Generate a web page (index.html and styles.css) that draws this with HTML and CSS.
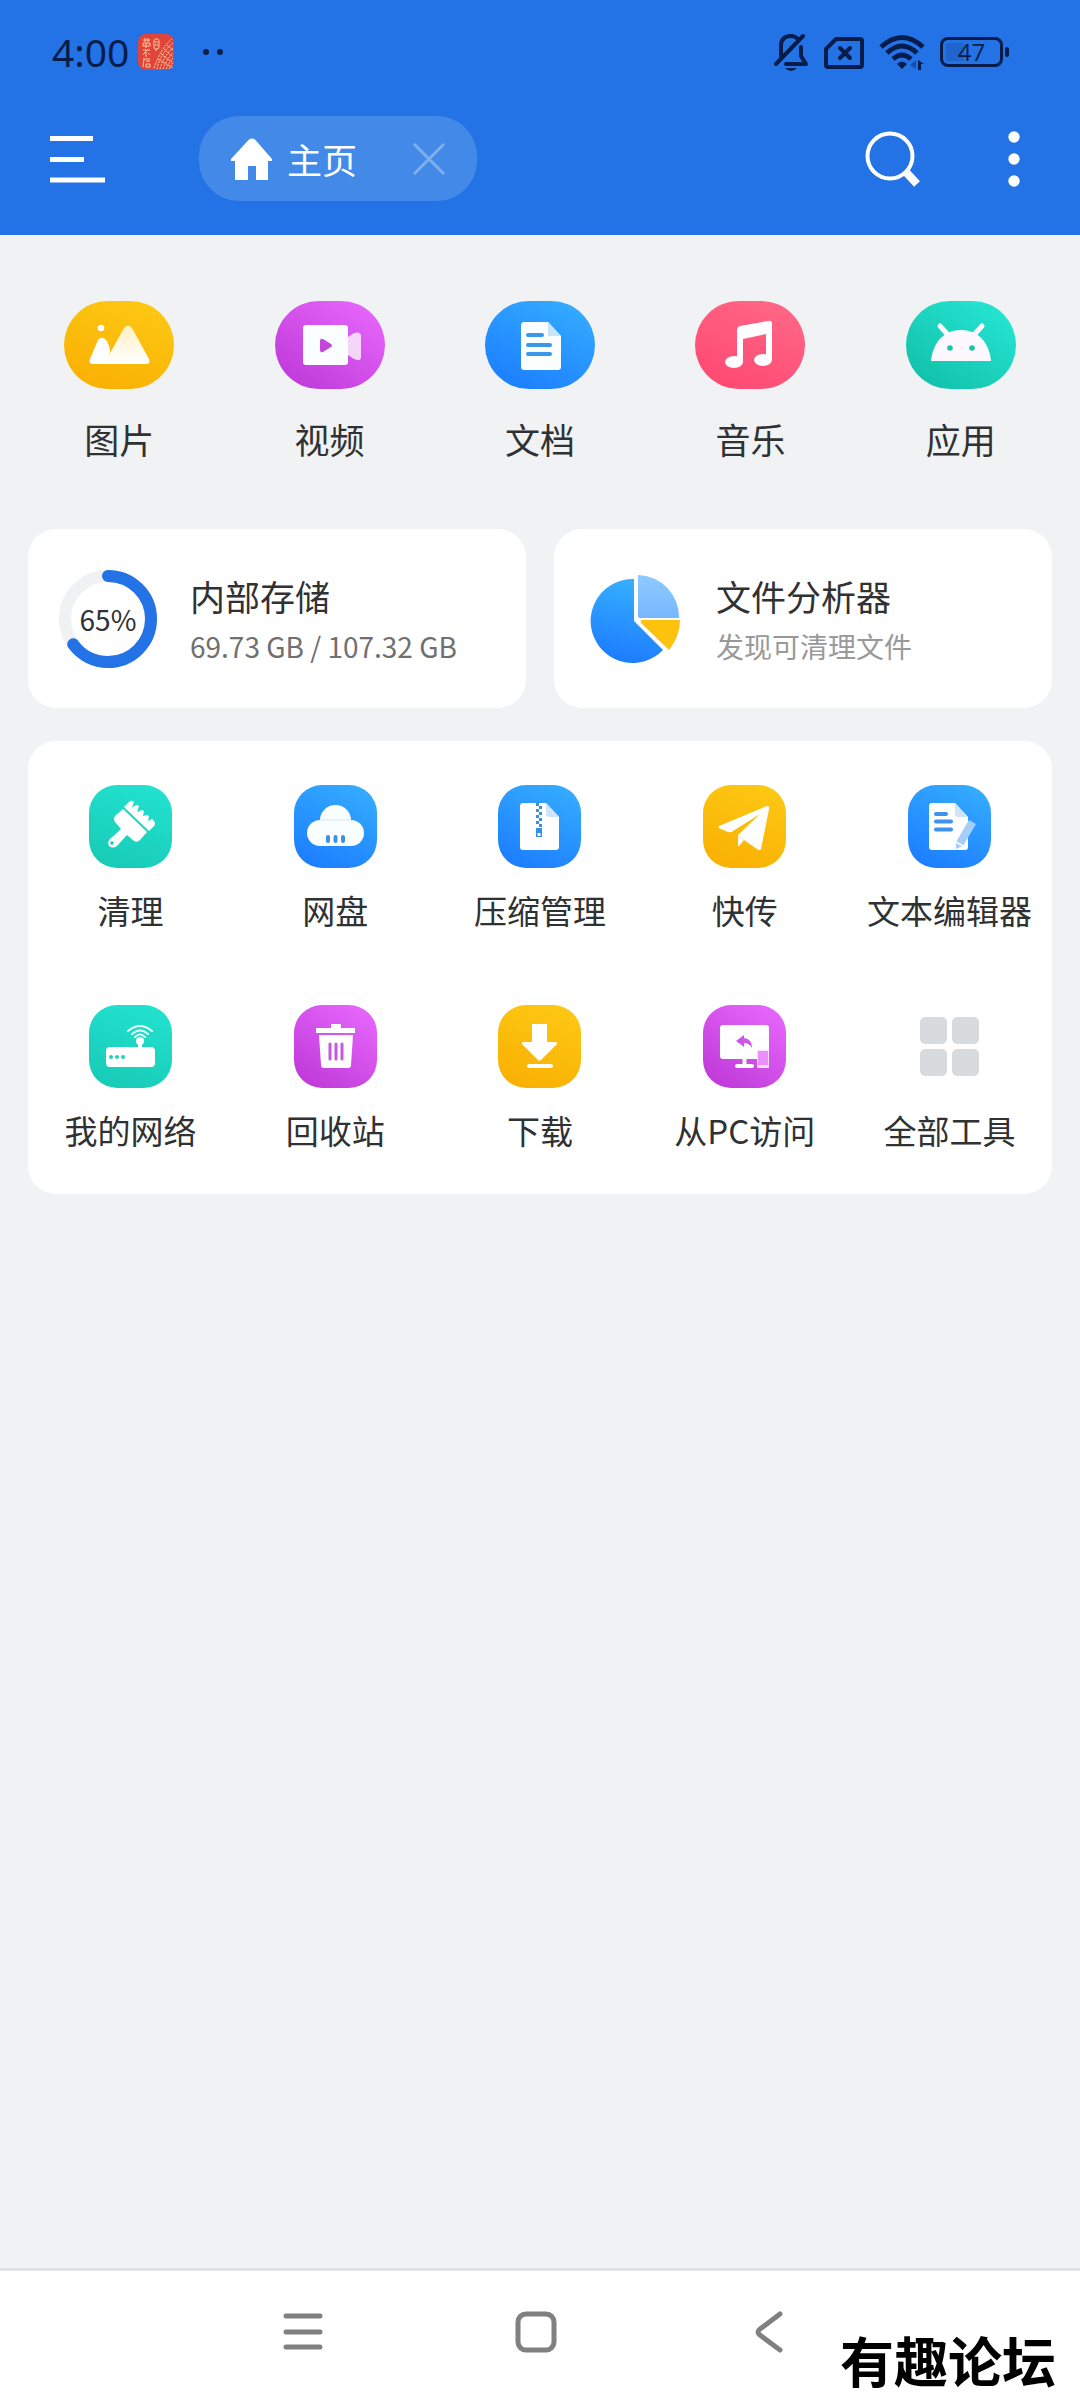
FILE: index.html
```html
<!DOCTYPE html>
<html lang="zh-CN">
<head>
<meta charset="utf-8">
<meta name="viewport" content="width=device-width, initial-scale=1">
<title>主页</title>
<link rel="stylesheet" href="styles.css">
</head>
<body>
<header class="header">
  <div class="status">
    <div class="status-group status-left">
      <span class="clock">4:00</span>
      <svg class="app-badge" width="36" height="36" viewBox="0 0 36 36" aria-hidden="true">
        <rect width="36" height="36" rx="8" fill="#e0443b"/>
        <g fill="none" stroke="#f6cf9f" stroke-width="1">
          <path d="M5 6h7M7 4v4M10 4v4M5 9h7v3H5zM8 9v5M5 16h7M9 16l-4 5M8 18v5M10 19l2 2M5 25h7M6 25l-1 8M8 27h4M8 30h4v3H8z"/>
          <rect x="16" y="5" width="5" height="10" rx="2"/><path d="M17 8h3M17 11h3M18 15v2"/>
          <path d="M16 34C20 22 27 10 34 5M19 35C21 25 27 15 35 9M22 35C24 27 29 19 35 14M25 35C27 29 31 23 35 19M28 35C30 31 32 27 35 24M31 35L35 29M20 25l15 9M23 20l12 9M26 15l9 8M29 11l6 5" stroke-dasharray="2 1"/>
        </g>
      </svg>
      <svg class="more-dots" width="20" height="8" viewBox="0 0 20 8" aria-hidden="true"><circle cx="3" cy="4" r="3"/><circle cx="17" cy="4" r="3"/></svg>
    </div>
    <div class="status-group status-right">
      <svg width="36" height="38" viewBox="0 0 36 38" aria-hidden="true">
        <g fill="none" stroke="#061d4b" stroke-width="4" stroke-linecap="round">
          <path d="M3 31L30 3"/><path d="M8 24V13Q8 3 18 3Q22 3 25 6"/><path d="M28 14V23L33 31H13" stroke-linejoin="round"/>
        </g>
        <path d="M12 35H24Q18 41 12 35Z" fill="#061d4b"/>
      </svg>
      <svg width="40" height="38" viewBox="0 0 40 38" aria-hidden="true">
        <path d="M12 6H36Q38 6 38 8V32Q38 34 36 34H4Q2 34 2 32V16Z" fill="none" stroke="#061d4b" stroke-width="4" stroke-linejoin="round"/>
        <path d="M16 15L26 25M26 15L16 25" stroke="#061d4b" stroke-width="4" stroke-linecap="round"/>
      </svg>
      <svg width="46" height="38" viewBox="0 0 46 38" aria-hidden="true">
        <g fill="none" stroke="#061d4b" stroke-width="5"><path d="M2 14Q23-5 44 14"/><path d="M8 20Q23 6 38 20"/><path d="M14 26Q23 18 32 26"/></g>
        <path d="M18 31Q23 26 28 31L23 36Z" fill="#061d4b"/>
        <path d="M37 27V36L31 32Z" fill="#1550ad"/><path d="M39 37V27L45 31H42V37Z" fill="#061d4b"/>
      </svg>
      <span class="battery"><span class="battery-level" style="width:36%"></span><span class="battery-text">47</span></span>
    </div>
  </div>
  <div class="toolbar">
    <button class="icon-btn" aria-label="菜单">
      <svg width="56" height="48" viewBox="0 0 56 48"><path d="M0 3.500H43M0 24.500H34M0 45H55" stroke="#fff" stroke-width="5"/></svg>
    </button>
    <div class="tab">
      <a class="tab-link" href="#home">
        <svg width="42" height="42" viewBox="0 0 42 42" aria-hidden="true"><path d="M18 1.500Q21-.500 24 1.500L41 21V23H37V42H25V28H17V42H4V23H0V21Z" fill="#fff"/></svg>
        <span>主页</span>
      </a>
      <button class="icon-btn" aria-label="关闭"><svg width="32" height="32" viewBox="0 0 32 32"><path d="M1 1L31 31M31 1L1 31" stroke="#7fafef" stroke-width="3"/></svg></button>
    </div>
    <div class="actions">
      <button class="icon-btn" aria-label="搜索"><svg width="56" height="56" viewBox="0 0 56 56"><circle cx="25" cy="25" r="22.500" fill="none" stroke="#fff" stroke-width="4"/><path d="M40 40L52 53" stroke="#fff" stroke-width="8"/></svg></button>
      <button class="icon-btn" aria-label="更多"><svg width="12" height="56" viewBox="0 0 12 56"><g fill="#fff"><circle cx="6" cy="6" r="5.700"/><circle cx="6" cy="28" r="5.700"/><circle cx="6" cy="50" r="5.700"/></g></svg></button>
    </div>
  </div>
</header>

<main class="content">
  <nav class="categories" aria-label="分类">
    <a class="category" href="#images">
      <span class="pill yellow"><svg viewBox="0 0 110 88" aria-hidden="true"><defs><linearGradient id="peak" x1="0" y1="0" x2="0" y2="1"><stop offset="0" stop-color="#fff0c4"/><stop offset="1" stop-color="#fff"/></linearGradient></defs><circle cx="37" cy="27" r="3.300" fill="#fff"/><path d="M60 27Q64 22 68 27L85 58Q87 63 82 63H40Z" fill="url(#peak)"/><path d="M34 39Q38 34 43 40Q46 46 46 51L42 63H29Q24 63 26 58Z" fill="#fff"/></svg></span>
      <span>图片</span>
    </a>
    <a class="category" href="#videos">
      <span class="pill purple"><svg viewBox="0 0 110 88" aria-hidden="true"><path d="M73 36L79 32Q86 30 86 35V56Q86 61 79 58L73 54Z" fill="#f5d6fb"/><rect x="28" y="24" width="45" height="40" rx="3" fill="#fafeff"/><path d="M45 40Q45 37 48 38L56 43Q58 45 56 46L48 51Q45 52 45 49Z" fill="#c447dc"/></svg></span>
      <span>视频</span>
    </a>
    <a class="category" href="#docs">
      <span class="pill blue"><svg viewBox="0 0 110 88" aria-hidden="true"><path d="M39 21H63L76 35V66Q76 69 73 69H39Q36 69 36 66V24Q36 21 39 21Z" fill="#fafeff"/><path d="M63 21L76 35H63Z" fill="#c8e4fb"/><path d="M43 34H57M43 44H65M43 53H65" stroke="#3a97ea" stroke-width="4" stroke-linecap="round"/></svg></span>
      <span>文档</span>
    </a>
    <a class="category" href="#music">
      <span class="pill pink"><svg viewBox="0 0 110 88" aria-hidden="true"><path d="M42 29Q42 26 45 25L73 20Q77 19 77 23V58H71V33L48 38V61H42Z" fill="#fff"/><ellipse cx="39" cy="61" rx="9" ry="6" fill="#fff"/><ellipse cx="68" cy="59" rx="9" ry="6" fill="#fff"/></svg></span>
      <span>音乐</span>
    </a>
    <a class="category" href="#apps">
      <span class="pill green"><svg viewBox="0 0 110 88" aria-hidden="true"><path d="M25 60C27 40 39 29 55 29S83 40 85 60Z" fill="#fdf8ff"/><path d="M34 25L43 35M76 25L67 35" stroke="#fdf8ff" stroke-width="5" stroke-linecap="round"/><g fill="#17c4ae"><circle cx="44" cy="47" r="2.800"/><circle cx="66" cy="47" r="2.800"/></g></svg></span>
      <span>应用</span>
    </a>
  </nav>

  <section class="cards">
    <a class="card" href="#storage">
      <span class="ring">
        <svg viewBox="0 0 98 98" aria-hidden="true"><circle cx="49" cy="49" r="43" fill="none" stroke="#f0f1f3" stroke-width="12"/><circle cx="49" cy="49" r="43" fill="none" stroke="#2373e6" stroke-width="12" stroke-linecap="round" pathLength="100" stroke-dasharray="65 100" transform="rotate(-90 49 49)"/></svg>
        <span class="ring-text">65%</span>
      </span>
      <span class="card-text"><span class="card-title">内部存储</span><span class="card-sub">69.73 GB / 107.32 GB</span></span>
    </a>
    <a class="card" href="#analyzer">
      <svg class="pie" viewBox="-3 0 98 98" aria-hidden="true"><defs><linearGradient id="pb" x1=".6" y1="0" x2=".4" y2="1"><stop offset="0" stop-color="#36b0ff"/><stop offset="1" stop-color="#1c7bff"/></linearGradient><linearGradient id="pl" x1=".5" y1="0" x2=".5" y2="1"><stop offset="0" stop-color="#8ecaff"/><stop offset="1" stop-color="#78b7ff"/></linearGradient></defs>
        <path d="M46 9V51L75 80A42 42 0 1 1 46 9Z" fill="url(#pb)"/><path d="M50 5A42 42 0 0 1 91 48H52Q50 48 50 46Z" fill="url(#pl)"/><path d="M54 50H92Q92 66 81 80L53 53Q52 50 54 50Z" fill="#fcc20e"/></svg>
      <span class="card-text"><span class="card-title">文件分析器</span><span class="card-sub muted">发现可清理文件</span></span>
    </a>
  </section>

  <section class="tools" aria-label="工具">
    <a class="tool" href="#clean">
      <span class="tile green-light"><svg viewBox="0 0 83 83" aria-hidden="true"><g fill="#fff"><path d="M34 24L58 47L51 55Q48 58 45 56L38 50L28 61Q24 64 20 61Q18 57 21 54L32 44L26 37Q24 34 26 31Z"/><path d="M35 22L41 16Q43 15 45 17L43 22L48 20L50 21L48 27L53 25L55 26L54 31L58 30L60 31L59 36L63 34L65 36Q67 39 65 41L60 46Z"/></g><circle cx="23" cy="58" r="1.800" fill="#1acdb9"/></svg></span><span>清理</span></a>
    <a class="tool" href="#cloud">
      <span class="tile blue"><svg viewBox="0 0 83 83" aria-hidden="true"><rect x="13" y="35" width="57" height="26" rx="13" fill="#fafeff"/><path d="M26 35A15.500 15 0 0 1 57 35Z" fill="#fafeff"/><path d="M26 35H57" stroke="#dcf3fb" stroke-width="1.500"/><path d="M34 52V56M41.500 52V56M49 52V56" stroke="#3b90e8" stroke-width="4" stroke-linecap="round"/></svg></span><span>网盘</span></a>
    <a class="tool" href="#zip">
      <span class="tile blue"><svg viewBox="0 0 83 83" aria-hidden="true"><path d="M25 18H48L61 32V62Q61 65 58 65H25Q22 65 22 62V21Q22 18 25 18Z" fill="#fff"/><path d="M48 18L61 32H51Q48 32 48 29Z" fill="#cfe3fb"/><path d="M39.500 18V42" stroke="#338fe8" stroke-width="3" stroke-dasharray="3 3"/><path d="M42.500 21V42" stroke="#338fe8" stroke-width="3" stroke-dasharray="3 3"/><path d="M38 43H44V52H38ZM39.500 48V51H42.500V48Z" fill="#338fe8" fill-rule="evenodd"/></svg></span><span>压缩管理</span></a>
    <a class="tool" href="#send">
      <span class="tile yellow"><svg viewBox="0 0 83 83" aria-hidden="true"><g fill="#fff"><path d="M16 41L64 21Q67 21 66 24L58 64Q57 66 54 64L41 55L36 61Q35 62 35 60V50L57 29L30 46Q28 48 25 47L16 43Q15 42 16 41Z"/></g><path d="M35 51L41 55" stroke="#fde8a8" stroke-width="1"/></svg></span><span>快传</span></a>
    <a class="tool" href="#editor">
      <span class="tile blue"><svg viewBox="0 0 83 83" aria-hidden="true"><path d="M24 18H47L60 32V62Q60 65 57 65H24Q21 65 21 62V21Q21 18 24 18Z" fill="#fff"/><path d="M47 18L60 32H50Q47 32 47 29Z" fill="#d0e3fa"/><path d="M28 29H38M28 36.500H43M28 44.500H43" stroke="#3d92ea" stroke-width="4" stroke-linecap="round"/><path d="M61 35L68 39L55 61L48 64V57Z" fill="#a4cefb"/><path d="M48 57L55 61" stroke="#fff" stroke-width="1.500"/></svg></span><span>文本编辑器</span></a>
    <a class="tool" href="#network">
      <span class="tile green-light"><svg viewBox="0 0 83 83" aria-hidden="true"><rect x="17" y="42" width="49" height="20" rx="4" fill="#fff"/><circle cx="51" cy="36" r="4" fill="#fff"/><path d="M51 36V44" stroke="#fff" stroke-width="4"/><g fill="none" stroke="#e6fffb" stroke-width="2" stroke-linecap="round"><path d="M39 26Q51 16 63 26"/><path d="M43 29Q51 22 59 29"/><path d="M46 32Q51 27 56 32"/></g><g fill="#1fd0bc"><circle cx="22" cy="52" r="2"/><circle cx="28" cy="52" r="2"/><circle cx="34" cy="52" r="2"/></g></svg></span><span>我的网络</span></a>
    <a class="tool" href="#trash">
      <span class="tile purple"><svg viewBox="0 0 83 83" aria-hidden="true"><path d="M22 23H37V20Q37 19 38 19H46Q47 19 47 20V23H61V28H22ZM25 30H59L57 60Q57 63 54 63H30Q27 63 27 60Z" fill="#fff"/><path d="M36 39V54M42 39V54M48 39V54" stroke="#c956e2" stroke-width="3" stroke-linecap="round"/></svg></span><span>回收站</span></a>
    <a class="tool" href="#downloads">
      <span class="tile yellow"><svg viewBox="0 0 83 83" aria-hidden="true"><path d="M34 19H49V37H58Q60 38 59 39L43 55Q41.500 56 40 55L24 39Q23 38 25 37H34Z" fill="#fff"/><rect x="29" y="59" width="26" height="4" rx="2" fill="#fff"/></svg></span><span>下载</span></a>
    <a class="tool" href="#pc">
      <span class="tile purple"><svg viewBox="0 0 83 83" aria-hidden="true"><rect x="17" y="20" width="49" height="34" rx="3" fill="#fff"/><path d="M41.500 54V60" stroke="#fff" stroke-width="4"/><rect x="32" y="59" width="19" height="4" rx="2" fill="#fff"/><rect x="54" y="45" width="12" height="18" rx="1" fill="#fbdcff"/><rect x="55" y="46" width="10" height="14" fill="#ea8ffc"/><path d="M33 36L41 30V33Q49 34 49 43Q46 38 41 38V42Z" fill="#cf55e8"/></svg></span><span>从PC访问</span></a>
    <a class="tool" href="#all">
      <span class="tile"><svg viewBox="0 0 83 83" aria-hidden="true"><g fill="#d8dbde"><rect x="12" y="12" width="27" height="27" rx="5"/><rect x="44" y="12" width="27" height="27" rx="5"/><rect x="12" y="44" width="27" height="27" rx="5"/><rect x="44" y="44" width="27" height="27" rx="5"/></g></svg></span><span>全部工具</span></a>
  </section>
</main>

<footer class="navbar">
  <button class="icon-btn" aria-label="最近任务"><svg width="42" height="42" viewBox="0 0 42 42"><path d="M4 5H38M4 21H38M4 36H38" stroke="#808080" stroke-width="5" stroke-linecap="round"/></svg></button>
  <button class="icon-btn" aria-label="主屏幕"><svg width="42" height="42" viewBox="0 0 42 42"><rect x="3" y="3" width="36" height="36" rx="8" fill="none" stroke="#808080" stroke-width="5"/></svg></button>
  <button class="icon-btn" aria-label="返回"><svg width="42" height="42" viewBox="0 0 42 42"><path d="M32 3L12 18Q8 21 12 24L32 39" fill="none" stroke="#808080" stroke-width="5" stroke-linecap="round"/></svg></button>
  <span class="watermark">有趣论坛</span>
</footer>
</body>
</html>
```
FILE: styles.css
```css
* {
  box-sizing: border-box;
}

body {
  margin: 0;
  min-height: 100vh;
  display: flex;
  flex-direction: column;
  background: #f0f2f4;
  color: #303133;
  font-family: "Noto Sans CJK SC", sans-serif;
}

a {
  color: inherit;
  text-decoration: none;
}

svg {
  display: block;
}

.icon-btn {
  padding: 0;
  border: 0;
  background: none;
}

/* Header */
.header {
  height: 235px;
  padding: 32px 60px 0 50px;
  background: #2373e6;
}

.status {
  display: flex;
  justify-content: space-between;
  align-items: center;
  height: 40px;
}

.status-group {
  display: flex;
  align-items: center;
  color: #061d4b;
}

.status-left {
  padding-left: 2px;
}

.clock {
  font: 39px/40px "Noto Sans", sans-serif;
}

.app-badge {
  margin-left: 9px;
}

.more-dots {
  margin-left: 29px;
  fill: #061d4b;
}

.status-right {
  gap: 15px;
  padding-right: 17px;
}

.battery {
  position: relative;
  display: flex;
  width: 63px;
  height: 30px;
  padding: 3px;
  border: 3px solid #061d4b;
  border-radius: 8px;
}

.battery::after {
  content: "";
  position: absolute;
  left: 62px;
  top: 7px;
  width: 4px;
  height: 10px;
  border-radius: 2px;
  background: #061d4b;
}

.battery-level {
  border-radius: 2px;
  background: #2065cc;
}

.battery-text {
  position: absolute;
  inset: 0;
  text-align: center;
  font: 24px/24px "Open Sans", sans-serif;
}

.toolbar {
  display: flex;
  align-items: center;
  height: 85px;
  margin-top: 44px;
}

.tab {
  display: flex;
  align-items: center;
  justify-content: space-between;
  width: 278px;
  height: 85px;
  margin-left: 93px;
  padding: 0 32px;
  border-radius: 40px;
  background: #4389e8;
  color: #fff;
  font-size: 35px;
  line-height: 40px;
}

.tab-link {
  display: flex;
  align-items: center;
  gap: 14px;
}

.actions {
  display: flex;
  gap: 87px;
  margin-left: auto;
}

/* Categories */
.content {
  flex: 1;
}

.categories {
  display: grid;
  grid-template-columns: repeat(5, 1fr);
  padding: 66px 14px 0;
}

.category {
  display: flex;
  flex-direction: column;
  align-items: center;
  gap: 30px;
  font-size: 35px;
  line-height: 40px;
}

.pill {
  width: 110px;
  height: 88px;
  border-radius: 44px;
}

.yellow {
  background: linear-gradient(200deg, #fdca15, #f9ae02);
}

.purple {
  background: linear-gradient(215deg, #ea6bff, #bb35d5);
}

.blue {
  background: linear-gradient(205deg, #36b0ff, #1a79ff);
}

.pink {
  background: linear-gradient(205deg, #ff6a88, #ff4670);
}

.green {
  background: linear-gradient(215deg, #26e9d6, #10bda6);
}

.green-light {
  background: linear-gradient(200deg, #22e4d1, #17c9b4);
}

/* Storage and analyzer cards */
.cards {
  display: grid;
  grid-template-columns: 1fr 1fr;
  gap: 28px;
  margin: 70px 28px 0;
}

.card {
  display: flex;
  align-items: center;
  gap: 33px;
  height: 179px;
  padding: 4px 31px 0;
  border-radius: 28px;
  background: #fff;
}

.ring {
  position: relative;
  width: 98px;
  margin-bottom: 4px;
}

.ring-text {
  position: absolute;
  inset: 0;
  text-align: center;
  font-size: 28px;
  line-height: 98px;
}

.pie {
  width: 98px;
  margin-bottom: 4px;
}

.card-text {
  display: flex;
  flex-direction: column;
  gap: 10px;
}

.card-title {
  font-size: 35px;
  line-height: 40px;
}

.card-sub {
  color: #707070;
  font-size: 28px;
  line-height: 40px;
}

.muted {
  color: #999;
}

/* Tools */
.tools {
  display: grid;
  grid-template-columns: repeat(5, 1fr);
  row-gap: 75px;
  margin: 33px 28px 0;
  padding: 44px 0;
  border-radius: 28px;
  background: #fff;
}

.tool {
  display: flex;
  flex-direction: column;
  align-items: center;
  gap: 22px;
  white-space: nowrap;
  font-size: 33px;
  line-height: 40px;
}

.tile {
  width: 83px;
  height: 83px;
  border-radius: 28px;
}

/* System navigation */
.navbar {
  position: relative;
  display: flex;
  justify-content: center;
  align-items: center;
  gap: 191px;
  height: 132px;
  padding: 0 8px 8px 0;
  border-top: 3px solid #dfe1e3;
  background: #fff;
}

.watermark {
  position: absolute;
  right: 24px;
  bottom: 0;
  color: #000;
  font: bold 54px/80px "Noto Sans CJK SC", sans-serif;
}
```
